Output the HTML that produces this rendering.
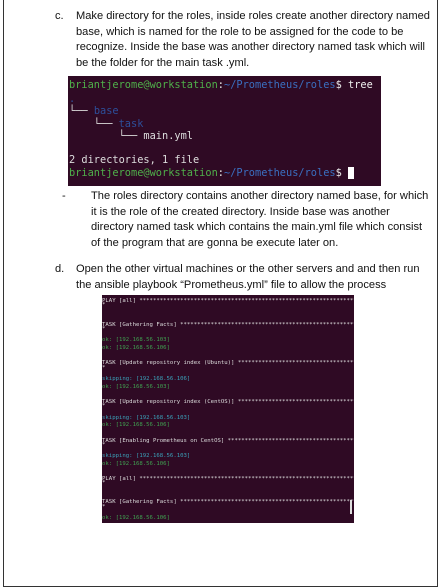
<!DOCTYPE html>
<html><head><meta charset="utf-8"><style>
body{margin:0;width:440px;height:588px;background:#fff;position:relative;overflow:hidden;font-family:"Liberation Sans",Arial,sans-serif;color:#111}
.frame{position:absolute;left:3px;top:-2px;width:435px;height:589px;border:1px solid #333;box-sizing:border-box}
.t{position:absolute;font-size:11.1px;line-height:15.5px;white-space:nowrap}
.term{position:absolute;background:#2f0a24;overflow:hidden}
.m{font-family:"DejaVu Sans Mono","Liberation Mono",monospace;position:absolute;white-space:pre;color:#eee}
.g{color:#4fb04a}.b{color:#3a6fc0}.d{color:#2d4f9a}
.s{position:absolute;left:0;font-family:"DejaVu Sans Mono",monospace;font-size:5.65px;line-height:6px;white-space:pre;color:#ddd}
.ok{color:#3fa050}.sk{color:#3aa0b8}
</style></head><body>
<div class="frame"></div>
<div class="t" style="left:55px;top:9px">c.</div>
<div class="t" style="left:76px;top:9px">Make directory for the roles, inside roles create another directory named<br>base, which is named for the role to be assigned for the code to be<br>recognize. Inside the base was another directory named task which will<br>be the folder for the main task .yml.</div>

<div class="term" style="left:68px;top:76px;width:313px;height:110px">
<div class="m" style="left:1px;top:3px;font-size:10.3px;line-height:12.3px"><span class="g">briantjerome@workstation</span>:<span class="b">~/Prometheus/roles</span>$ tree</div>
<div class="m" style="left:1px;top:17px;font-size:10.3px;line-height:12.3px;color:#ddd"><span class="d">.</span>
└── <span class="d">base</span>
    └── <span class="d">task</span>
        └── main.yml

2 directories, 1 file</div>
<div class="m" style="left:1px;top:91px;font-size:10.3px;line-height:12.3px"><span class="g">briantjerome@workstation</span>:<span class="b">~/Prometheus/roles</span>$ <span style="background:#fff">&nbsp;</span></div>
</div>

<div class="t" style="left:62px;top:189px">-</div>
<div class="t" style="left:91px;top:189px">The roles directory contains another directory named base, for which<br>it is the role of the created directory. Inside base was another<br>directory named task which contains the main.yml file which consist<br>of the program that are gonna be execute later on.</div>
<div class="t" style="left:55px;top:262px">d.</div>
<div class="t" style="left:76px;top:262px">Open the other virtual machines or the other servers and and then run<br>the ansible playbook “Prometheus.yml” file to allow the process</div>

<div class="term" style="left:102px;top:295px;width:252px;height:228px">
<div class="s" style="top:3px">PLAY [all] ***********************************************************************</div>
<div class="s" style="top:7px">*</div>
<div class="s" style="top:27px">TASK [Gathering Facts] ***********************************************************</div>
<div class="s" style="top:31px">*</div>
<div class="s ok" style="top:42px">ok: [192.168.56.103]</div>
<div class="s ok" style="top:50px">ok: [192.168.56.106]</div>
<div class="s" style="top:65px">TASK [Update repository index (Ubuntu)] ******************************************</div>
<div class="s" style="top:70px">*</div>
<div class="s sk" style="top:81px">skipping: [192.168.56.106]</div>
<div class="s ok" style="top:89px">ok: [192.168.56.103]</div>
<div class="s" style="top:104px">TASK [Update repository index (CentOS)] ******************************************</div>
<div class="s" style="top:108px">*</div>
<div class="s sk" style="top:120px">skipping: [192.168.56.103]</div>
<div class="s ok" style="top:127px">ok: [192.168.56.106]</div>
<div class="s" style="top:143px">TASK [Enabling Prometheus on CentOS] *********************************************</div>
<div class="s" style="top:147px">*</div>
<div class="s sk" style="top:158px">skipping: [192.168.56.103]</div>
<div class="s ok" style="top:166px">ok: [192.168.56.106]</div>
<div class="s" style="top:181px">PLAY [all] ***********************************************************************</div>
<div class="s" style="top:185px">*</div>
<div class="s" style="top:204px">TASK [Gathering Facts] ***********************************************************</div>
<div class="s" style="top:209px">*</div>
<div class="s ok" style="top:220px">ok: [192.168.56.106]</div>
<div style="position:absolute;left:248px;top:205px;width:2px;height:14px;background:#ddd"></div>
</div>
</body></html>
